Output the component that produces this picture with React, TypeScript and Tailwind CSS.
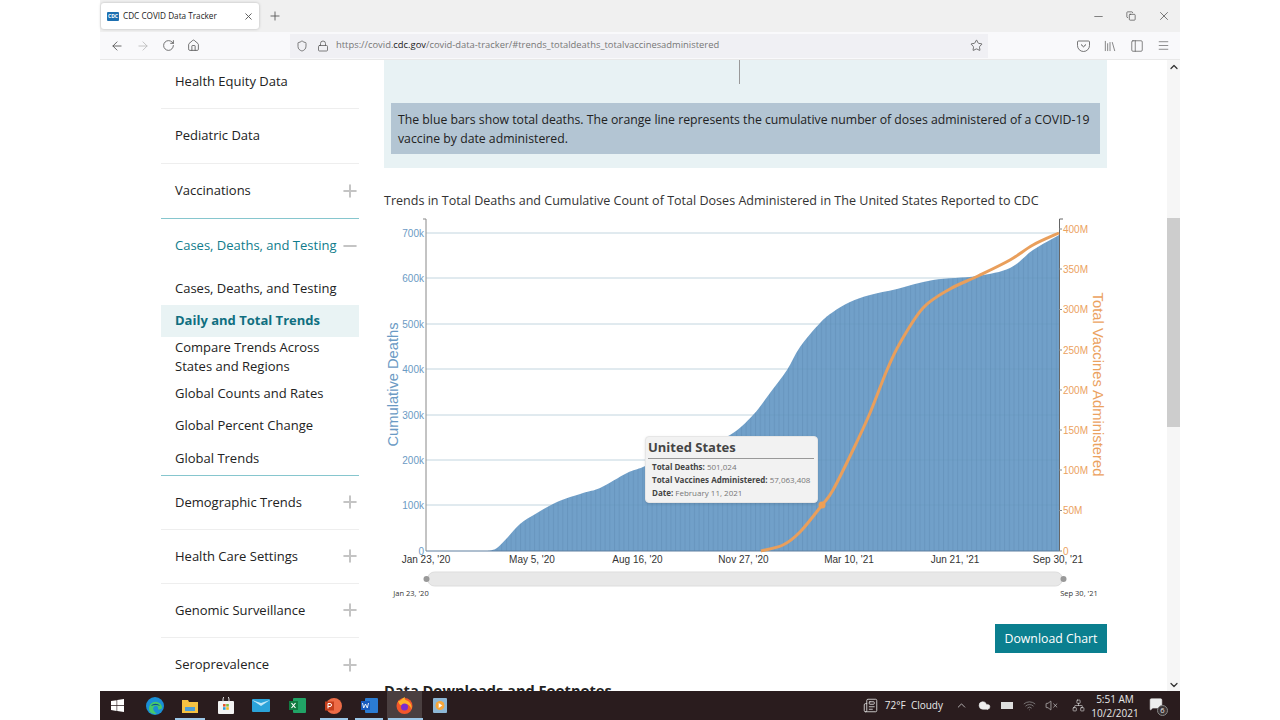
import { ChevronUp, ChevronDown, ArrowLeft, ArrowRight, RotateCw, Home, Shield, Lock, Star, Library, PanelLeft, Menu, X, Plus, Minus, Copy, Newspaper, Cloud, Wifi, VolumeX, Network, MessageSquare } from 'lucide-react'

const SANS = { fontFamily: '"Open Sans", sans-serif' }

function NavRow({ label, open, last }: { label: string; open?: boolean; last?: boolean }) {
  return (
    <div className={`h-[54px] flex items-center justify-between pl-[14px] ${last || open ? '' : 'border-b border-[#eeeeee]'}`}>
      <span className={open ? 'text-[#0f7c8c]' : 'text-[#222]'}>{label}</span>
      {open ? <Minus className="w-[20px] h-[20px] -mr-[1px] text-[#c4c4c4]" strokeWidth={2.4} /> : <Plus className="w-[20px] h-[20px] -mr-[1px] text-[#c4c4c4]" strokeWidth={2.4} />}
    </div>
  )
}

function Sidebar() {
  return (
    <div className="w-[198px] ml-[61px] -mt-[5px] shrink-0 text-[13px]">
      <div className="h-[54.4px] flex items-center pl-[14px] border-b border-[#eeeeee] text-[#222]">Health Equity Data</div>
      <div className="h-[54.4px] flex items-center pl-[14px] border-b border-[#eeeeee] text-[#222]">Pediatric Data</div>
      <div className="h-[55px] flex items-center justify-between pl-[14px] border-b border-[#86c6ce] text-[#222]">
        <span>Vaccinations</span>
        <Plus className="w-[20px] h-[20px] -mr-[1px] text-[#c4c4c4]" strokeWidth={2.4} />
      </div>
      <NavRow label="Cases, Deaths, and Testing" open />
      <div className="border-b border-[#86c6ce] text-[#222]">
        <div className="h-[32px] flex items-center pl-[14px]">Cases, Deaths, and Testing</div>
        <div className="h-[32px] flex items-center pl-[14px] bg-[#e9f3f4] font-bold text-[#0f6f80]">Daily and Total Trends</div>
        <div className="h-[41px] pl-[14px] pt-[1px] leading-[19px]">Compare Trends Across<br />States and Regions</div>
        <div className="h-[32px] flex items-center pl-[14px]">Global Counts and Rates</div>
        <div className="h-[32px] flex items-center pl-[14px]">Global Percent Change</div>
        <div className="h-[33px] flex items-center pl-[14px]">Global Trends</div>
      </div>
      <NavRow label="Demographic Trends" />
      <NavRow label="Health Care Settings" />
      <NavRow label="Genomic Surveillance" />
      <NavRow label="Seroprevalence" last />
    </div>
  )
}

// catmull-rom through the traced points so the curves don't look faceted
function smooth(pts: number[][]) {
  let d = `M${pts[0][0]},${pts[0][1]}`
  for (let i = 0; i < pts.length - 1; i++) {
    const p0 = pts[i - 1] || pts[i]
    const p1 = pts[i]
    const p2 = pts[i + 1]
    const p3 = pts[i + 2] || p2
    const c1x = p1[0] + (p2[0] - p0[0]) / 6
    const c1y = p1[1] + (p2[1] - p0[1]) / 6
    const c2x = p2[0] - (p3[0] - p1[0]) / 6
    const c2y = p2[1] - (p3[1] - p1[1]) / 6
    d += ` C${c1x},${c1y} ${c2x},${c2y} ${p2[0]},${p2[1]}`
  }
  return d
}

const areaPts = [[488, 551], [497, 548], [508, 537], [520, 524], [537, 513], [557, 502], [583, 493], [600, 488], [627, 473], [643, 467], [665, 457], [695, 449], [730, 435], [753, 415], [770, 393], [787, 370], [800, 347], [820, 323], [833, 312], [850, 302], [870, 295], [897, 289], [933, 280], [977, 276], [1010, 268], [1033, 250], [1059, 235]]
const vaccinePts = [[761, 551], [783, 545], [800, 532], [822, 505], [833, 490], [853, 450], [870, 413], [887, 370], [900, 343], [923, 308], [950, 289], [978, 276], [1010, 260], [1033, 245], [1059, 233]]
const area = `M426,551 L488,551 ${smooth(areaPts).replace(/^M[^ ]+/, '')} L1059,551 Z`
const vaccines = smooth(vaccinePts)

function Chart() {
  const left: [string, number][] = [['700k', 233], ['600k', 278], ['500k', 324], ['400k', 369], ['300k', 415], ['200k', 460], ['100k', 505], ['0', 551]]
  const right: [string, number][] = [['400M', 229], ['350M', 269], ['300M', 309.5], ['250M', 350], ['200M', 390], ['150M', 430], ['100M', 470], ['50M', 510.5], ['0', 551]]
  const xs: [string, number][] = [["Jan 23, '20", 426], ["May 5, '20", 532], ["Aug 16, '20", 637.5], ["Nov 27, '20", 743.5], ["Mar 10, '21", 849], ["Jun 21, '21", 955], ["Sep 30, '21", 1058]]
  return (
    <div className="relative h-[393px] mt-[2px]">
      <svg viewBox="384 212 723 393" width="723" height="393" className="block" style={{ fontFamily: '"Liberation Sans", sans-serif' }}>
        <defs>
          <pattern id="bars" x="426" y="0" width="4.7" height="10" patternUnits="userSpaceOnUse">
            <rect width="4.7" height="10" fill="#71a0c9" />
            <rect width="1" height="10" fill="#6896bf" />
          </pattern>
        </defs>
        {left.slice(0, 7).map(([, y]) => <line key={y} x1="426" x2="1059" y1={y} y2={y} stroke="#e0e9ef" strokeWidth="1" />)}
        <path d={area} fill="url(#bars)" />
        {left.slice(0, 7).map(([, y]) => <line key={y} x1="426" x2="1059" y1={y} y2={y} stroke="#5f8aae" strokeOpacity="0.2" strokeWidth="1" />)}
        <line x1="426" x2="1059" y1="551" y2="551" stroke="#5f7f9f" strokeWidth="1" />
        <path d="M423,219 H426 V551" fill="none" stroke="#888" strokeWidth="1" />
        <path d="M1063,219 H1059.5 V551" fill="none" stroke="#666" strokeWidth="1" />
        {left.map(([t, y]) => <text key={t} x="424" y={y + 3.5} textAnchor="end" fontSize="10" fill="#6b9ac4">{t}</text>)}
        {right.map(([t, y]) => (
          <g key={t}>
            <line x1="1059" x2="1062" y1={y} y2={y} stroke="#888" />
            <text x="1063" y={y + 3.5} fontSize="10" fill="#eba25f">{t}</text>
          </g>
        ))}
        {xs.map(([t, x]) => <text key={t} x={x} y="563" textAnchor="middle" fontSize="10" fill="#333">{t}</text>)}
        <text transform="translate(398 384.5) rotate(-90)" textAnchor="middle" fontSize="14.7" fill="#6b9ac4">Cumulative Deaths</text>
        <text transform="translate(1093 384.5) rotate(90)" textAnchor="middle" fontSize="14.8" fill="#eba25f">Total Vaccines Administered</text>
        <path d={vaccines} fill="none" stroke="#e99f5c" strokeWidth="3" strokeLinejoin="round" />
        <circle cx="822" cy="505" r="3.5" fill="#ee9f55" />
        <rect x="427.5" y="572" width="635" height="14" rx="7" fill="#e8e8e8" stroke="#ddd" />
        <circle cx="426.5" cy="579" r="3" fill="#999" />
        <circle cx="1063.5" cy="579" r="3" fill="#999" />
        <text x="411" y="596" textAnchor="middle" fontSize="7.5" fill="#333" style={SANS}>Jan 23, '20</text>
        <text x="1079" y="596" textAnchor="middle" fontSize="7.5" fill="#333" style={SANS}>Sep 30, '21</text>
      </svg>
      <div className="absolute left-[261px] top-[224px] w-[173px] h-[67px] bg-[#f2f2f2] rounded-[4px] border border-[#e6e6e6] pl-[2px] pr-[3px] pt-[2px] shadow-sm">
        <div className="text-[13px] leading-[17px] font-bold text-[#444] border-b border-[#999] pb-[2px]">United States</div>
        <div className="pl-[4px] pt-[1px] text-[8px] leading-[13px] text-[#777]">
          <div><b className="text-[#444]">Total Deaths:</b> 501,024</div>
          <div><b className="text-[#444]">Total Vaccines Administered:</b> 57,063,408</div>
          <div><b className="text-[#444]">Date:</b> February 11, 2021</div>
        </div>
      </div>
    </div>
  )
}

function BrowserChrome() {
  return (
    <>
      <div className="h-[32px] bg-[#f0f0f0] flex items-start shrink-0">
        <div className="ml-[1px] mt-[3px] w-[158px] h-[26px] bg-white rounded-[3px] shadow-[0_0_3px_rgba(0,0,0,0.25)] flex items-center pl-[6px] pr-[5px]">
          <div className="w-[12px] h-[9px] bg-[#1d6fb0] rounded-[1px] mr-[4px] shrink-0 text-[5px] leading-[9px] font-bold text-white text-center">CDC</div>
          <span className="text-[8.2px] text-[#222] flex-1 whitespace-nowrap">CDC COVID Data Tracker</span>
          <X className="w-[11px] h-[11px] text-[#555]" />
        </div>
        <Plus className="ml-[9px] mt-[9px] w-[14px] h-[14px] text-[#555]" strokeWidth={1.5} />
        <div className="flex-1" />
        <div className="flex items-center gap-[21px] mt-[9px] pr-[9px] text-[#444]">
          <Minus className="w-[13px] h-[13px]" strokeWidth={1.2} />
          <Copy className="w-[10px] h-[10px]" strokeWidth={1.6} />
          <X className="w-[14px] h-[14px]" strokeWidth={1.2} />
        </div>
      </div>
      <div className="h-[28px] bg-[#f9f9fb] border-b border-[#e8e8e8] flex items-center shrink-0 text-[#555]">
        <ArrowLeft className="ml-[10px] w-[14px] h-[14px]" strokeWidth={1.5} />
        <ArrowRight className="ml-[12px] w-[14px] h-[14px] text-[#bbb]" strokeWidth={1.5} />
        <RotateCw className="ml-[12px] w-[13px] h-[13px]" strokeWidth={1.5} />
        <Home className="ml-[12px] w-[13px] h-[13px]" strokeWidth={1.5} />
        <div className="ml-[90px] w-[698px] h-[24px] bg-[#f0f0f4] flex items-center pl-[6px] pr-[5px]">
          <Shield className="w-[12px] h-[12px]" strokeWidth={1.5} />
          <Lock className="ml-[9px] w-[12px] h-[12px]" strokeWidth={1.5} />
          <span className="ml-[7px] text-[9.4px] text-[#777] flex-1 whitespace-nowrap">
            https://covid.<span className="text-[#222]">cdc.gov</span>/covid-data-tracker/#trends_totaldeaths_totalvaccinesadministered
          </span>
          <Star className="w-[13px] h-[13px]" strokeWidth={1.5} />
        </div>
        <div className="flex-1" />
        <div className="flex items-center gap-[13px] pr-[10px]">
          <svg width="13" height="12" viewBox="0 0 13 12" fill="none" stroke="#555" strokeWidth="0.8">
            <path d="M1.5 1h10a1 1 0 0 1 1 1v3.500a6 6 0 0 1-12 0V2a1 1 0 0 1 1-1z" />
            <path d="M4 4.500l2.500 2.300L9 4.500" strokeWidth="1" />
          </svg>
          <Library className="w-[14px] h-[14px]" strokeWidth={1.2} />
          <PanelLeft className="w-[14px] h-[14px]" strokeWidth={1.2} />
          <Menu className="w-[13px] h-[13px]" strokeWidth={1.2} />
        </div>
      </div>
    </>
  )
}

function Taskbar() {
  return (
    <div className="h-[29px] bg-[#2a1c1e] flex items-center shrink-0 relative text-[#e8e8e8]">
      <div className="w-[35px] flex justify-center">
        <svg width="13" height="13" viewBox="0 0 13 13" fill="#fff"><path d="M0 2l5.600-.8v5H0zM6.200 1.100L13 0v6.200H6.200zM0 6.900h5.600v5L0 11zM6.200 6.900H13V13l-6.800-1z" /></svg>
      </div>
      <div className="w-[35px] ml-[2px] flex justify-center">
        <svg width="18" height="18" viewBox="0 0 18 18"><circle cx="9" cy="9" r="9" fill="#1a8fd6" /><path d="M3 12c0-5 4-8 8-7 3 .6 5 3 5 5.500 0 1.500-2 2-4 2 1-3-2-5-4-3-1.500 1.500-1 5 3 7-4 1.500-8-1-8-4.500z" fill="#47c96b" /><path d="M5 9c2-3 7-3 9 0-3-1.500-6-1-9 0z" fill="#0c4f96" /></svg>
      </div>
      <div className="w-[36px] flex justify-center">
        <svg width="16" height="14" viewBox="0 0 16 14"><path d="M0 1h6l1 2h9v11H0z" fill="#f5c242" /><rect x="3" y="8" width="10" height="4" fill="#4d9fd6" /></svg>
      </div>
      <div className="w-[35px] flex justify-center">
        <svg width="16" height="17" viewBox="0 0 16 17"><rect y="4" width="16" height="13" rx="1" fill="#f3f3f3" /><path d="M5 5V2a3 3 0 0 1 6 0v3" fill="none" stroke="#ddd" /><rect x="5" y="7" width="2.600" height="2.600" fill="#e2572d" /><rect x="8.200" y="7" width="2.600" height="2.600" fill="#7fba3a" /><rect x="5" y="10.200" width="2.600" height="2.600" fill="#2a9fd8" /><rect x="8.200" y="10.200" width="2.600" height="2.600" fill="#f5b81f" /></svg>
      </div>
      <div className="w-[36px] flex justify-center">
        <svg width="18" height="13" viewBox="0 0 18 13"><rect width="18" height="13" rx="1" fill="#2ba3d9" /><path d="M0 1l9 6 9-6-9 3z" fill="#bfe6f7" /></svg>
      </div>
      <div className="w-[36px] flex justify-center">
        <svg width="17" height="15" viewBox="0 0 17 15"><rect x="4" width="13" height="15" rx="1" fill="#21a366" /><rect width="9" height="9" x="0" y="3" fill="#107c41" /><path d="M2.500 5l4 5M6.500 5l-4 5" stroke="#fff" strokeWidth="1.200" /></svg>
      </div>
      <div className="w-[36px] flex justify-center">
        <svg width="17" height="16" viewBox="0 0 17 16"><circle cx="9" cy="8" r="8" fill="#ed6c47" /><rect y="3.500" width="9" height="9" fill="#c43e1c" /><path d="M3 10.500V5.500h2a1.400 1.400 0 0 1 0 3H3" fill="none" stroke="#fff" /></svg>
      </div>
      <div className="w-[36px] flex justify-center">
        <svg width="17" height="15" viewBox="0 0 17 15"><rect x="4" width="13" height="15" rx="1" fill="#2b7cd3" /><rect y="3" width="9" height="9" fill="#185abd" /><path d="M1.500 5l1.200 5 1.800-4 1.800 4L7.500 5" fill="none" stroke="#fff" strokeWidth=".9" /></svg>
      </div>
      <div className="w-[35px] h-full bg-[#4a3f40] flex justify-center items-center">
        <svg width="17" height="17" viewBox="0 0 17 17"><circle cx="8.500" cy="9" r="8" fill="#f2562b" /><path d="M2 4c2 1 4-3 7-4-1 2 0 3 3 4 3 2 4 5 3.500 8-2-5-6-6-9-4-2 1-3 0-4.500-4z" fill="#fdb32a" /><circle cx="8.500" cy="10" r="3.500" fill="#7a2ecf" /></svg>
      </div>
      <div className="w-[35px] flex justify-center">
        <svg width="14" height="15" viewBox="0 0 14 15"><rect width="14" height="15" rx="1" fill="#8db7d6" /><circle cx="7" cy="7.500" r="4.500" fill="#f7a63a" /><path d="M5.700 5l3.600 2.500-3.600 2.500z" fill="#fff" /></svg>
      </div>
      <div className="flex-1" />
      <Newspaper className="w-[17px] h-[15px]" strokeWidth={1.3} />
      <span className="ml-[6px] text-[10px] whitespace-nowrap">72°F&nbsp; Cloudy</span>
      <ChevronUp className="ml-[12px] w-[13px] h-[13px]" strokeWidth={1.3} />
      <Cloud className="ml-[10px] w-[13px] h-[13px]" fill="#eee" strokeWidth={1} />
      <div className="ml-[10px] w-[12px] h-[7px] bg-[#ddd]" />
      <Wifi className="ml-[10px] w-[13px] h-[13px] text-[#999]" strokeWidth={1.3} />
      <VolumeX className="ml-[9px] w-[13px] h-[13px]" strokeWidth={1.1} />
      <Network className="ml-[14px] w-[13px] h-[13px]" strokeWidth={1.1} />
      <div className="w-[60px] text-center text-[10px] leading-[14px]">
        <div>5:51 AM</div>
        <div>10/2/2021</div>
      </div>
      <div className="ml-[4px] mr-[13px] w-[18px] h-[18px] relative">
        <MessageSquare className="w-[14px] h-[14px]" fill="#eee" strokeWidth={1} />
        <span className="absolute -right-[1px] -bottom-[1px] w-[11px] h-[11px] rounded-full bg-[#3c3435] border border-[#888] text-[7.5px] leading-[9px] text-center">6</span>
      </div>
      <div className="absolute left-[75px] bottom-0 w-[30px] h-[2px] bg-[#9cc7e8]" />
      <div className="absolute left-[220px] bottom-0 w-[28px] h-[2px] bg-[#9cc7e8]" />
      <div className="absolute left-[255px] bottom-0 w-[28px] h-[2px] bg-[#9cc7e8]" />
      <div className="absolute left-[288px] bottom-0 w-[35px] h-[2px] bg-[#9cc7e8]" />
    </div>
  )
}

export default function App() {
  return (
    <div className="w-[1280px] h-[720px] bg-white flex justify-center overflow-hidden" style={SANS}>
      <div className="w-[1080px] h-full flex flex-col">
        <BrowserChrome />
        <div className="flex-1 min-h-0 flex overflow-hidden">
          <Sidebar />
          <div className="ml-[25px] w-[723px] shrink-0">
            <div className="h-[108px] bg-[#e8f2f4] px-[7px]">
              <div className="ml-[348px] w-[1px] h-[24px] bg-[#999]" />
              <div className="mt-[19px] h-[51px] bg-[#b3c5d3] pl-[7px] pt-[7px] text-[12.25px] leading-[19px] text-[#222] whitespace-nowrap">
                The blue bars show total deaths. The orange line represents the cumulative number of doses administered of a COVID-19<br />vaccine by date administered.
              </div>
            </div>
            <div className="mt-[23px] text-[12.55px] leading-[19px] text-[#333] whitespace-nowrap">
              Trends in Total Deaths and Cumulative Count of Total Doses Administered in The United States Reported to CDC
            </div>
            <Chart />
            <div className="flex justify-end mt-[19px]">
              <div className="w-[112px] h-[29px] pt-[1px] bg-[#0b7f8f] text-white text-[12.3px] flex items-center justify-center">Download Chart</div>
            </div>
            <div className="mt-[26px] text-[14.6px] font-bold text-[#222] leading-[22px]">Data Downloads and Footnotes</div>
          </div>
          <div className="flex-1" />
          <div className="w-[13px] shrink-0 bg-[#f6f6f6] flex flex-col items-center text-[#333]">
            <ChevronUp className="mt-[1px] w-[12px] h-[12px]" strokeWidth={2.5} />
            <div className="w-full h-[209px] bg-[#cdcdcd] mt-[145px]" />
            <div className="flex-1" />
            <ChevronDown className="w-[12px] h-[12px]" strokeWidth={2.5} />
          </div>
        </div>
        <Taskbar />
      </div>
    </div>
  )
}
